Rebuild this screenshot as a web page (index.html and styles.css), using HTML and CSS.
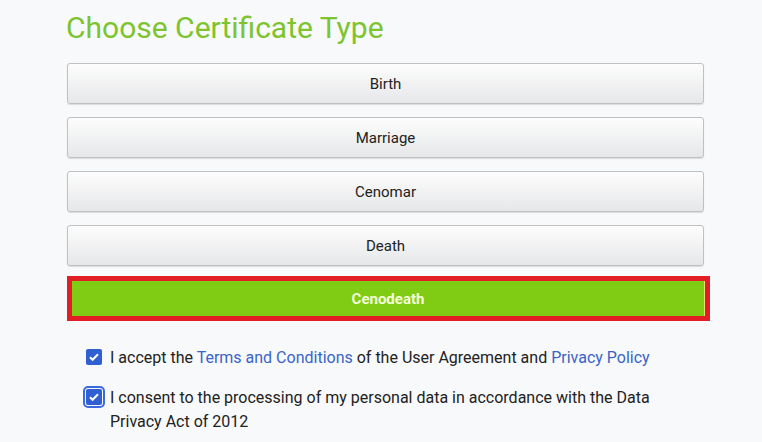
FILE: index.html
```html
<!DOCTYPE html>
<html lang="en">
<head>
    <meta charset="UTF-8">
    <meta name="viewport" content="width=device-width, initial-scale=1.0">
    <title>Choose Certificate Type</title>
    <link rel="stylesheet" href="styles.css">
</head>
<body>
    <div class="container">
        <h1>Choose Certificate Type</h1>

        <!-- Certificate options -->
        <div class="types">
            <button class="type-btn">Birth</button>
            <button class="type-btn">Marriage</button>
            <button class="type-btn">Cenomar</button>
            <button class="type-btn">Death</button>
            <div class="selected">
                <button class="type-btn active">Cenodeath</button>
            </div>
        </div>

        <!-- Agreements -->
        <div class="agreements">
            <label class="agree">
                <span class="box"><svg viewBox="0 0 16 16"><path d="M4 8.3l2.6 2.5L12 5.3" /></svg></span>
                <span>I accept the <a href="#">Terms and Conditions</a> of the User Agreement and <a href="#">Privacy Policy</a></span>
            </label>
            <label class="agree focused">
                <span class="box"><svg viewBox="0 0 16 16"><path d="M4 8.3l2.6 2.5L12 5.3" /></svg></span>
                <span>I consent to the processing of my personal data in accordance with the Data Privacy Act of 2012</span>
            </label>
        </div>
    </div>
</body>
</html>
```

FILE: styles.css
```css
body {
    margin: 0;
    background: #f8f9fa;
    font-family: Roboto, "Liberation Sans", sans-serif;
    color: #222;
}
.container {
    width: 643px;
    margin-left: 67px;
}
h1 {
    margin: 8px 0 0 -1px;
    font-size: 30px;
    font-weight: 400;
    color: #7dc42e;
    line-height: 40px;
    height: 55px;
}
.types {
    display: flex;
    flex-direction: column;
    gap: 13px;
}
.type-btn {
    display: block;
    width: 637px;
    height: 41px;
    padding: 0;
    font-family: inherit;
    font-size: 15px;
    color: #222;
    background: linear-gradient(#fdfdfd, #e6e7e9);
    border: 1px solid #bfc0c2;
    border-radius: 3px;
    box-shadow: 0 1px 1px rgba(0, 0, 0, 0.12);
    cursor: pointer;
}
.selected {
    margin-top: -3px;
    border: 5px solid #e21d25;
    width: 633px;
}
.type-btn.active {
    width: 633px;
    height: 35px;
    background: #80cc15;
    color: #f4ffd8;
    font-weight: 700;
    font-size: 15px;
    border: none;
    border-right: 1px solid #e8e070;
    border-radius: 0;
    box-shadow: none;
}
.agreements {
    margin: 25px 0 0 19px;
    width: 566px;
    font-size: 16px;
    line-height: 24px;
}
.agree {
    display: flex;
    gap: 8px;
    margin-bottom: 16px;
}
.agree a {
    color: #3a64c8;
    text-decoration: none;
}
.box {
    flex: none;
    width: 16px;
    height: 16px;
    margin-top: 3px;
    background: #2f5fd0;
    border-radius: 2px;
}
.box svg {
    display: block;
    width: 16px;
    height: 16px;
    fill: none;
    stroke: #fff;
    stroke-width: 2;
}
.focused .box {
    outline: 2px solid #3a6ae0;
    outline-offset: 1px;
}
```
